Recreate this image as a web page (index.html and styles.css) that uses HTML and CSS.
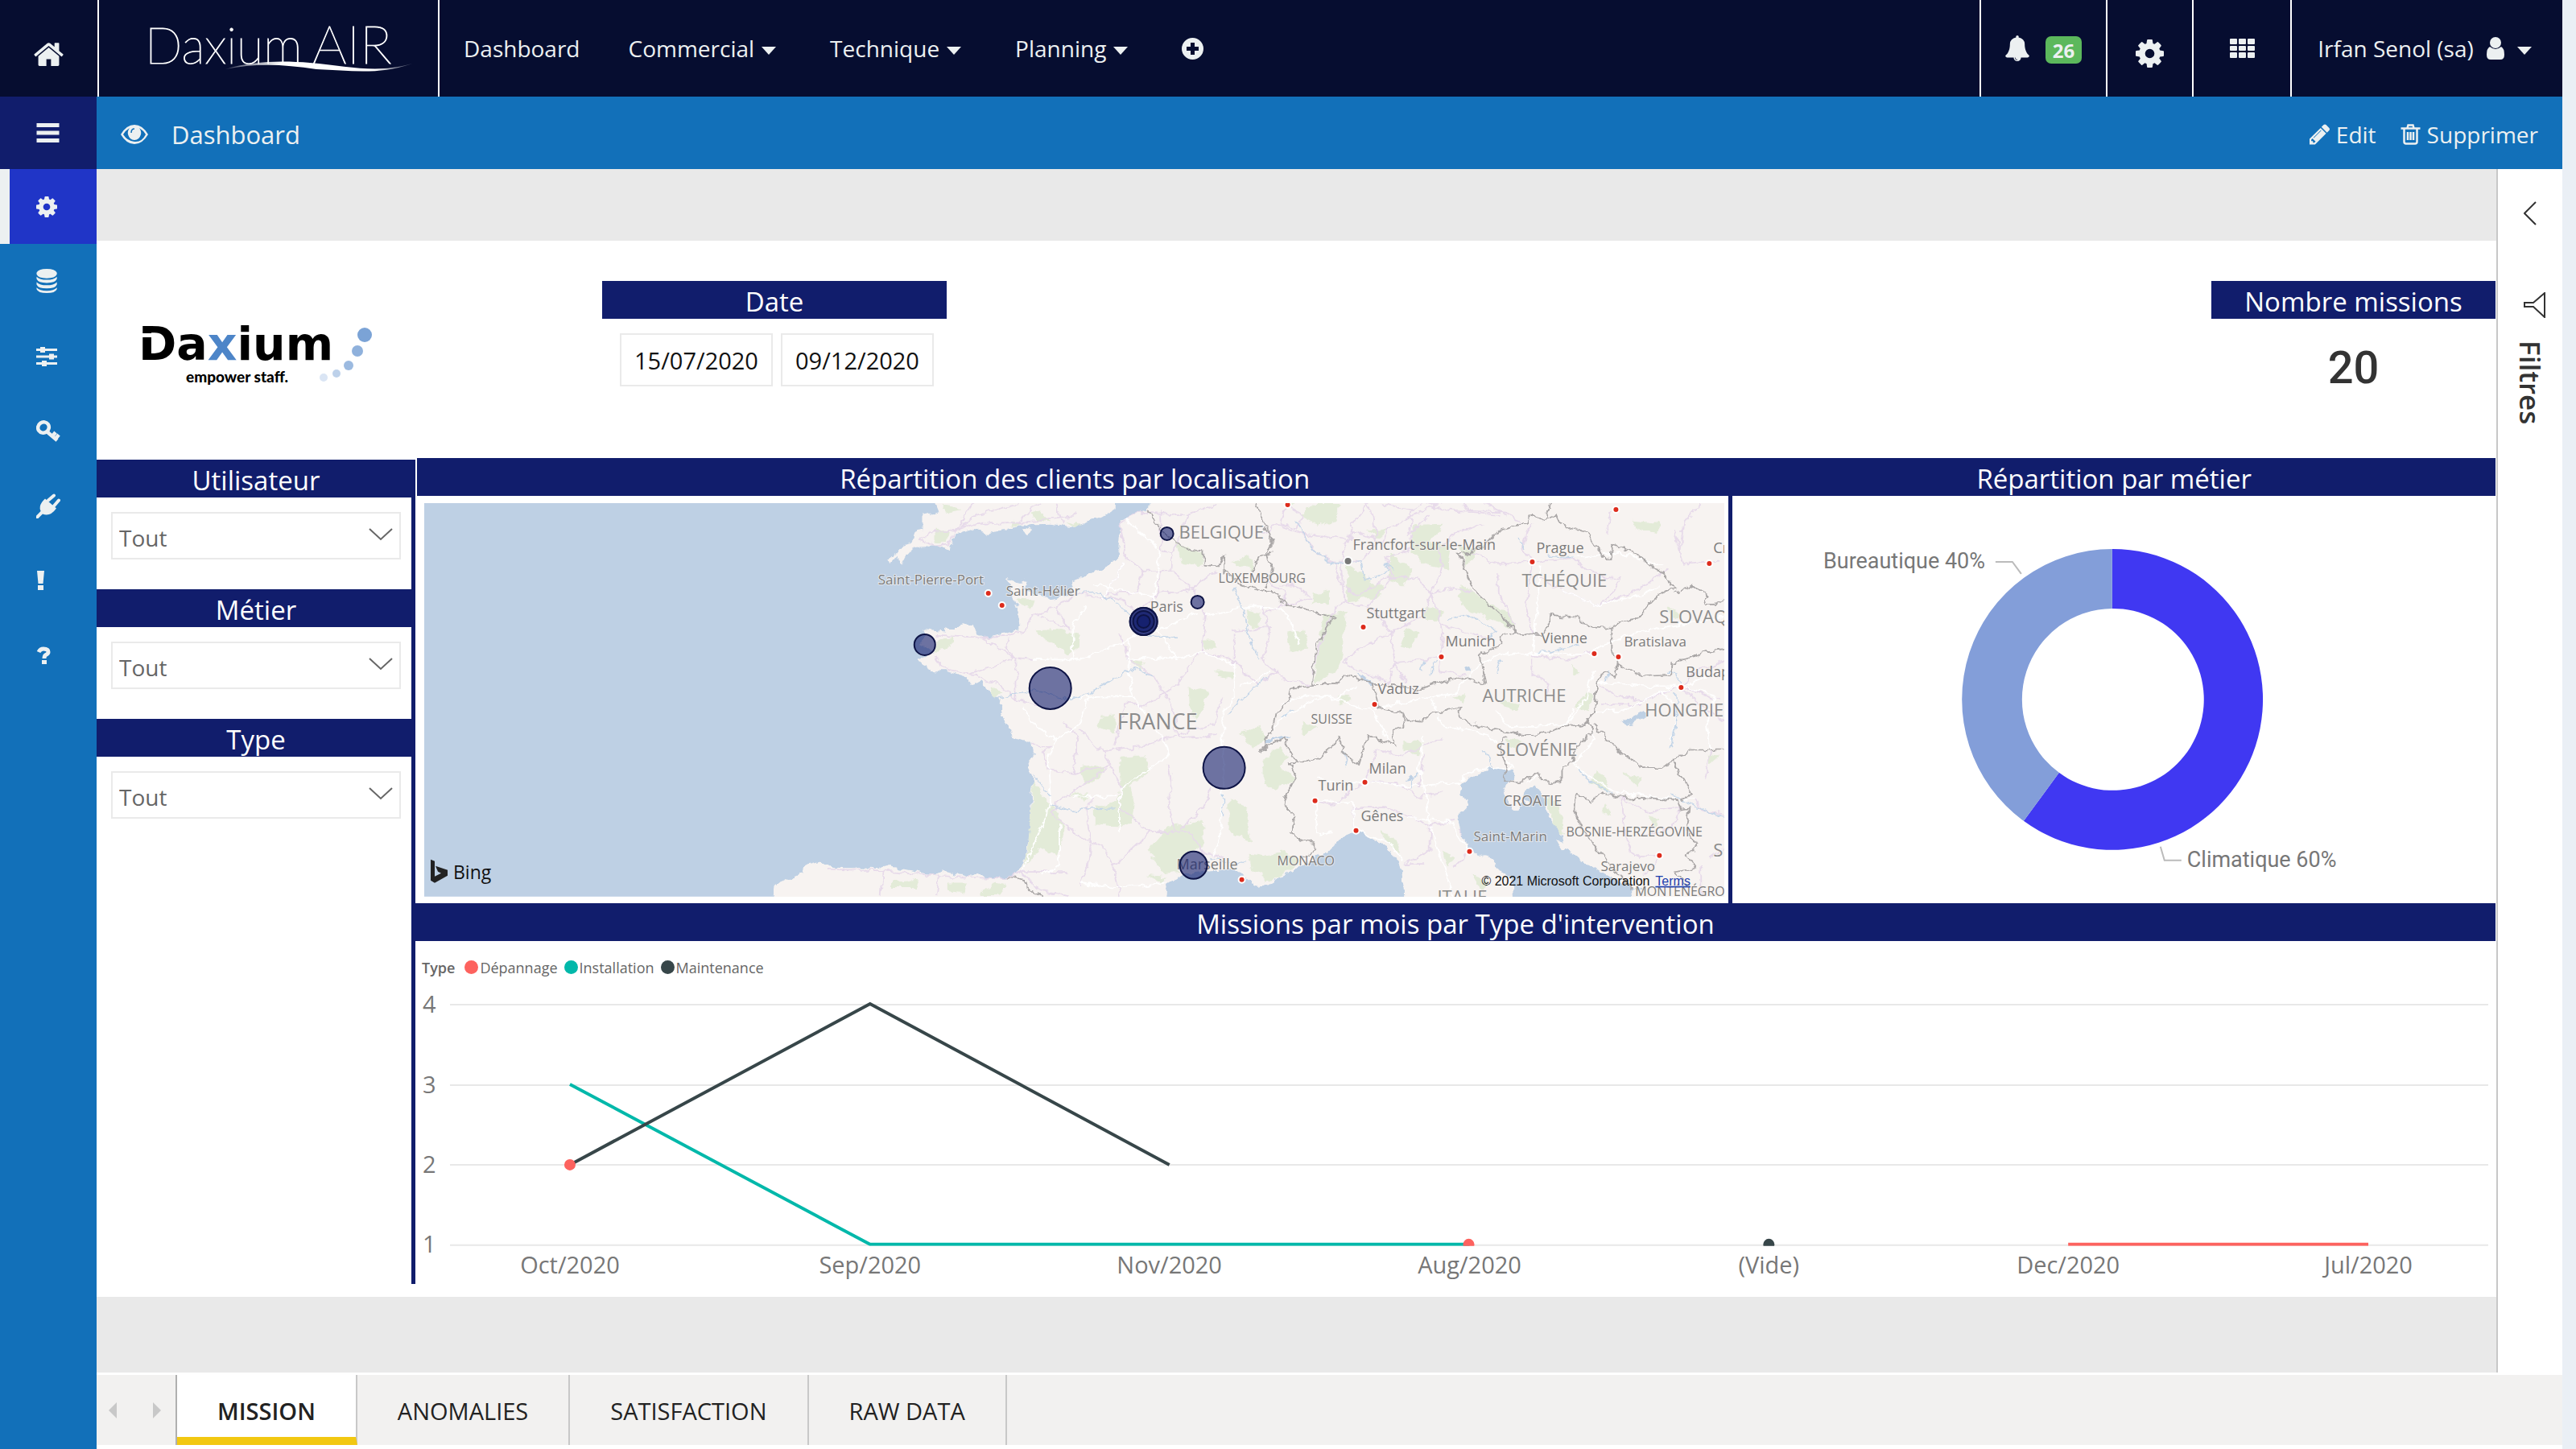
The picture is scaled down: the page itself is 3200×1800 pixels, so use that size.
FILE: index.html
```html
<!DOCTYPE html>
<html lang="fr">
<head>
<meta charset="utf-8">
<meta name="viewport" content="width=device-width, initial-scale=1">
<title>Daxium AIR - Dashboard</title>
<link rel="stylesheet" href="styles.css">
</head>
<body>
<svg class="sprite" aria-hidden="true">
  <symbol id="cog" viewBox="128 128 1536 1536"><path d="M1152 896q0-106-75-181t-181-75-181 75-75 181 75 181 181 75 181-75 75-181zm512-109v222q0 12-8 23t-20 13l-185 28q-19 54-39 91 35 50 107 138 10 12 10 25t-9 23q-27 37-99 108t-94 71q-12 0-26-9l-138-108q-44 23-91 38-16 136-29 186-7 28-36 28h-222q-14 0-24.500-8.500t-11.500-21.500l-28-184q-49-16-90-37l-141 107q-10 9-25 9-14 0-25-11-126-114-165-168-7-10-7-23 0-12 8-23 15-21 51-66.500t54-70.500q-27-50-41-99l-183-27q-13-2-21-12.500t-8-23.500v-222q0-12 8-23t19-13l186-28q14-46 39-92-40-57-107-138-10-12-10-24 0-10 9-23 26-36 98.500-107.500t94.500-71.500q13 0 26 10l138 107q44-23 91-38 16-136 29-186 7-28 36-28h222q14 0 24.500 8.500t11.500 21.500l28 184q49 16 90 37l142-107q9-9 24-9 13 0 25 10 129 119 165 170 7 8 7 22 0 12-8 23-15 21-51 66.500t-54 70.500q26 50 41 98l183 28q13 2 21 12.500t8 23.500z"/></symbol>
  <symbol id="caret" viewBox="0 0 18 10"><path d="M0 0h18l-9 10z"/></symbol>
  <symbol id="chevron" viewBox="0 0 30 16"><path d="M1 1l14 13L29 1" fill="none" stroke="#666" stroke-width="2"/></symbol>
</svg>
<div class="app">
  <header class="topbar">
    <a class="home" href="#" aria-label="Accueil"><svg class="ic-home" viewBox="89 200 1614 1336"><path d="M1472 992v480q0 26-19 45t-45 19h-384v-384h-256v384h-384q-26 0-45-19t-19-45v-480q0-1 .5-3t.5-3l575-474 575 474q1 2 1 6zm223-69l-62 74q-8 9-21 11h-3q-13 0-21-7l-692-577-692 577q-12 8-24 7-13-2-21-11l-62-74q-8-10-7-23.500t11-21.500l719-599q32-26 76-26t76 26l244 204v-195q0-14 9-23t23-9h192q14 0 23 9t9 23v408l219 182q10 8 11 21.500t-7 23.500z"/></svg></a>
    <a class="brand" href="#" aria-label="Daxium AIR">
      <svg viewBox="0 0 420 120"><defs><linearGradient id="swoosh"><stop offset="0" stop-color="#fff" stop-opacity=".2"/><stop offset=".3" stop-color="#fff"/><stop offset=".8" stop-color="#fff"/><stop offset="1" stop-color="#fff" stop-opacity=".2"/></linearGradient></defs>
      <text class="brand-a" x="57" y="79">Daxium</text><text class="brand-b" x="265" y="79">AIR</text>
      <path fill="url(#swoosh)" d="M157 86C190 76 225 75 262 78C310 82 345 92 389 79C350 93 315 88 270 86C230 80 195 78 157 86Z"/></svg>
    </a>
    <nav class="menu">
      <a href="#">Dashboard</a>
      <a class="drop" href="#">Commercial <svg class="caret"><use href="#caret"/></svg></a>
      <a class="drop" href="#">Technique <svg class="caret"><use href="#caret"/></svg></a>
      <a class="drop" href="#">Planning <svg class="caret"><use href="#caret"/></svg></a>
      <a href="#" class="plus" aria-label="Ajouter"><svg viewBox="0 0 27 27"><path fill-rule="evenodd" d="M13.500 0a13.500 13.500 0 1 0 0 27a13.500 13.500 0 0 0 0-27zM11 6h5v5h5v5h-5v5h-5v-5H6v-5h5z"/></svg></a>
    </nav>
    <a class="cell bell" href="#" aria-label="Notifications"><svg viewBox="64 0 1664 1792"><path d="M912 1696q0-16-16-16-59 0-101.500-42.500t-42.500-101.500q0-16-16-16t-16 16q0 73 51.500 124.500t124.500 51.500q16 0 16-16zm816-288q0 52-38 90t-90 38h-448q0 106-75 181t-181 75-181-75-75-181h-448q-52 0-90-38t-38-90q50-42 91-88t85-119.500 74.500-158.500 50-206 19.500-260q0-152 117-282.500t307-158.500q-8-19-8-39 0-40 28-68t68-28 68 28 28 68q0 20-8 39 190 28 307 158.500t117 282.500q0 139 19.500 260t50 206 74.500 158.500 85 119.500 91 88z"/></svg><span class="badge">26</span></a>
    <a class="cell gear" href="#" aria-label="Paramètres"><svg><use href="#cog"/></svg></a>
    <a class="cell apps" href="#" aria-label="Applications"><svg viewBox="0 0 31 24"><g><rect width="9" height="7" rx="1"/><rect x="11" width="9" height="7" rx="1"/><rect x="22" width="9" height="7" rx="1"/><rect y="9" width="9" height="6" rx="1"/><rect x="11" y="9" width="9" height="6" rx="1"/><rect x="22" y="9" width="9" height="6" rx="1"/><rect y="17" width="9" height="7" rx="1"/><rect x="11" y="17" width="9" height="7" rx="1"/><rect x="22" y="17" width="9" height="7" rx="1"/></g></svg></a>
    <a class="cell user" href="#">Irfan Senol (sa) <svg class="ic-user" viewBox="0 0 22 28"><circle cx="11" cy="7" r="7"/><path d="M4 12Q11 18 18 12Q22 14 22 22Q22 28 17 28H5Q0 28 0 22Q0 14 4 12z"/></svg><svg class="caret"><use href="#caret"/></svg></a>
  </header>

  <div class="body">
    <nav class="side" aria-label="Navigation latérale">
      <button class="burger" aria-label="Menu"><svg viewBox="0 0 28 24"><path d="M0 0h28v5H0zM0 9.500h28v5H0zM0 19h28v5H0z"/></svg></button>
      <a class="active" href="#" aria-label="Configuration"><svg viewBox="0 0 30 28"><use href="#cog" width="26" height="28"/></svg></a>
      <a href="#" aria-label="Données"><svg class="tall" viewBox="0 0 30 32"><path d="M0 5Q2 0 13 0T26 5V7Q24 12 13 12T0 7zM0 10Q4 14 13 14T26 10V13Q24 18 13 18T0 13zM0 17Q4 21 13 21T26 17V20Q24 25 13 25T0 20zM0 24Q4 28 13 28T26 24V26Q24 31 13 31T0 26z"/></svg></a>
      <a href="#" aria-label="Réglages"><svg viewBox="0 0 30 28"><path d="M0 4h26v3H0zM0 12.500h26v3H0zM0 21h26v3H0zM5 2h6v7H5zM16 10.500h6v7h-6zM7 19h6v7H7z"/></svg></a>
      <a href="#" aria-label="Accès"><svg viewBox="0 0 30 28"><path fill="none" stroke="#ecf0f1" stroke-width="4.500" d="M13 14L26 25M20 20l4-5M24 23l4-5"/><ellipse cx="9" cy="9" rx="7" ry="6.500" fill="none" stroke="#ecf0f1" stroke-width="4.500" transform="rotate(-35 9 9)"/></svg></a>
      <a href="#" aria-label="Connecteurs"><svg class="tall" viewBox="0 0 30 30"><path d="M1 29L7 23M15 8L22 2M22 15L28 8" fill="none" stroke="#ecf0f1" stroke-width="4" stroke-linecap="round"/><path d="M11 6l14 12q-8 11-17 7q-8-9 3-19z"/></svg></a>
      <a href="#" aria-label="Alertes"><svg viewBox="0 0 30 28"><path d="M1 1h9l-1.500 16h-6zM2 19h7v6H2z"/></svg></a>
      <a href="#" aria-label="Aide"><svg viewBox="0 0 30 28"><path fill="none" stroke="#ecf0f1" stroke-width="5" d="M3 9Q5 5 9 5Q15 5 15 9Q15 11 12 12.500Q10 13.500 10 17"/><path d="M7 19h6v5H7z"/></svg></a>
    </nav>

    <main class="content">
      <div class="subbar">
        <svg class="eye" viewBox="0 0 34 24"><path fill-rule="evenodd" d="M0 12Q7 0 17 0T34 12Q27 24 17 24T0 12zM3 12Q8 20 17 21T31 12Q28 7 23 4Q26 8 25 12Q23 19 17 19T9 12Q8 8 11 4Q6 7 3 12z"/><path d="M13 10Q13 5 17 5" fill="none" stroke="#1270b9" stroke-width="1.500"/></svg>
        <h1>Dashboard</h1>
        <a href="#"><svg viewBox="128 150 1515 1515"><path d="M491 1536l91-91-235-235-91 91v107h128v128h107zm523-928q0-22-22-22-10 0-17 7l-542 542q-7 7-7 17 0 22 22 22 10 0 17-7l542-542q7-7 7-17zm-54-192l416 416-832 832h-416v-416zm683 96q0 53-37 90l-166 166-416-416 166-165q36-38 90-38 53 0 91 38l235 234q37 39 37 91z"/></svg>Edit</a>
        <a href="#"><svg viewBox="0 0 24 26"><path fill="none" stroke="#ecf0f1" stroke-width="2.500" d="M0 5.500h24M4 5v17q0 2.500 2.500 2.500h11q2.500 0 2.500-2.500V5M8 5l1-3.500h6L16 5M8.500 10v10M12 10v10M15.500 10v10"/></svg>Supprimer</a>
      </div>
      <div class="stage">
        <section class="report">
          <div class="kpis">
            <svg class="logo" viewBox="0 0 320 100" role="img" aria-label="Daxium empower staff.">
              <text class="logo-name" x="52" y="55">Da<tspan class="blue">x</tspan>ium</text><path fill="#fff" d="M50 22h21v5H50z"/>
              <text class="logo-tag" x="111" y="83">empower staff.</text>
              <g fill="#7ba3d6"><circle cx="333" cy="24" r="9"/><circle cx="324" cy="44" r="7" opacity=".85"/><circle cx="313" cy="62" r="6" opacity=".75"/><circle cx="298" cy="72" r="5" opacity=".5"/><circle cx="282" cy="77" r="5" opacity=".28"/></g>
            </svg>
            <div class="card date">
              <h2>Date</h2>
              <div class="dates"><input aria-label="Date de début" value="15/07/2020"><input aria-label="Date de fin" value="09/12/2020"></div>
            </div>
            <div class="card count"><h2>Nombre missions</h2><output>20</output></div>
          </div>
          <div class="board">
            <div class="filters">
              <div class="filter"><h2><label for="f1">Utilisateur</label></h2><div class="pick"><select id="f1"><option>Tout</option></select><svg><use href="#chevron"/></svg></div></div>
              <div class="filter"><h2><label for="f2">Métier</label></h2><div class="pick"><select id="f2"><option>Tout</option></select><svg><use href="#chevron"/></svg></div></div>
              <div class="filter"><h2><label for="f3">Type</label></h2><div class="pick"><select id="f3"><option>Tout</option></select><svg><use href="#chevron"/></svg></div></div>
            </div>
            <div class="charts">
              <section class="geo">
                <h2>Répartition des clients par localisation</h2>
                <svg class="map" viewBox="527 625 1616 489" role="img" aria-label="Carte des clients">
                  <defs><filter id="rough" x="0" y="0" width="100%" height="100%"><feTurbulence type="fractalNoise" baseFrequency=".09" numOctaves="3" seed="4"/><feDisplacementMap in="SourceGraphic" scale="10" xChannelSelector="R" yChannelSelector="G"/></filter></defs>
                  <rect class="sea" x="527" y="625" width="1616" height="489"/>
                  <g filter="url(#rough)">
                    <g transform="translate(1020 620) scale(.357 .3333)">
                      <path class="land" d="M1150-40L1140 40L1045 75L1035 190L1045 210L1000 250L875 305L878 350L820 375L710 340L715 305L690 312L650 300L660 335L685 410L692 490L640 500L570 515L540 500L530 470L495 460L480 480L440 480L435 500L360 490L370 510L345 540L395 570L330 600L370 620L380 640L440 640L500 660L530 690L560 680L590 720L620 740L635 770L625 810L655 850L665 885L735 910L740 950L720 1000L740 1045L730 1130L730 1230L710 1340L690 1390L650 1415L590 1415L540 1395L520 1410L420 1385L390 1400L215 1365L190 1378L46 1374L-2 1346L-58 1363L-66 1396L-163 1440L-175 1540H3400V-40Z"/>
                      <path class="land" d="M385-20L410 45L355 60L355 110L325 125L320 160L290 170L260 205L225 215L235 235L262 215L280 245L295 215L325 180L400 175L440 195L470 130L520 110L580 130L640 120L690 95L800 92L890 105L930 80L980 65L1020 40V-20ZM695 115L715 105L738 115L718 132Z"/>
                      <g class="wood"><path d="M400 110L450 115L440 160L400 165ZM420 15L490 40L440 50ZM730 50L760 40L800 85L750 80ZM665 80L700 90L660 105ZM850 80L910 95L890 108ZM1230 160L1330 200L1320 250L1260 240ZM1480 210L1510 230L1500 270L1430 235ZM750 490L830 485L905 510L895 550L860 580L820 545L765 515ZM400 530L460 515L455 540L400 570ZM680 370L745 375L730 405L690 400ZM1480 410L1530 420L1525 480L1485 470ZM1330 530L1370 530L1375 560L1335 562ZM1280 700L1350 720L1310 825L1285 800ZM970 810L1025 805L1025 870L960 855ZM1370 640L1440 645L1430 675L1385 660ZM1070 600L1130 610L1110 640ZM900 1000L985 990L975 1040L920 1065ZM1035 960L1130 955L1140 1020L1080 1070L1090 1130L1080 1220L950 1210L950 1150L1030 1130L1045 1050ZM865 1100L930 1100L920 1125ZM740 1050L765 1090L830 1180L850 1240L820 1330L760 1300L700 1385L720 1300ZM1210 1220L1330 1200L1340 1290L1260 1330L1250 1390L1190 1400L1140 1310ZM1420 1110L1480 1150L1500 1280L1420 1240ZM1490 1320L1568 1330L1568 1380L1500 1390ZM1460 870L1530 840L1550 900L1500 930ZM250 1425L340 1420L330 1450L250 1450ZM440 1430L510 1430L500 1470L440 1460ZM600 1430L650 1440L620 1480L550 1480ZM1130 1400L1210 1410L1190 1430ZM590 700L630 720L600 740Z"/></g>
                      <g class="road"><path d="M530 15L470 120L530 65L640 30L700 15M340 155L380 120L470 115L440 180M340 155L400 175L440 170M470 115L520 95L690 85L740 30L770 15M690 85L900 60M820 15L840 90M400 510L560 515L640 510L710 495L730 440L820 400L860 480L760 440M400 590L420 630L510 650L590 630L670 590L560 515M510 650L620 690L680 750L760 770M670 590L740 597M680 590V750M650 520L645 560L675 590M1060 230L980 370L900 350L820 400M1060 210L1040 90L1100 50L1280 55L1380 20M1060 210L1120 270L1220 265L1225 200L1280 55M1120 270L1100 350H990M1180 40L1185 190L1225 200M1220 265L1300 340L1340 430L1325 570M1170 370L1180 270M980 360L1060 380L1100 420L1180 350L1270 345L1380 270M1040 500L1070 600L1160 660L1230 790L1240 890L1380 880M1320 570L1240 690L1130 770L1060 760L1020 920M1430 490L1568 480M1440 600V500M1320 570L1420 590L1520 690M735 920L800 920L770 940L790 1010L880 1020L890 880L840 830M900 860L980 940L1010 990L880 1020M980 940L1110 925L1240 880L1370 840L1400 740M1005 990L950 1040L820 1130L800 1170L900 1260L980 1290M1005 990L1040 1060L1040 1150L1150 1240L1280 1240L1330 1320L1400 1340M950 1110L920 1160L940 1270L930 1370L900 1440M1150 1240L1080 1310L1020 1370L980 1290M1210 990L1220 1060L1210 1130L1230 1240M1360 1080L1330 1150L1250 1230M20 1380L215 1385L420 1405L500 1410L640 1415L700 1390L860 1390M215 1385L210 1480M410 1400L400 1480M1020 1370L1040 1480M700 1390L760 1460L860 1480"/></g>
                      <g class="road pale"><path d="M1060 70L1180 190L1160 370L940 315M980 370L1060 230M920 400L875 480L880 600L740 597M1100 500L1040 540L880 605M1070 520V630L1090 740L1200 910M1200 910L1210 960L1040 1080V1240M870 740L1090 735M1070 600L1230 590L1330 570L1440 615V740L1400 790V900L1400 1100L1390 1270L1360 1330M1460 700L1568 640M820 900L900 840L930 740M700 770L750 850L820 900L790 960L800 1140L700 1390M830 1210V1370L770 1400M900 1430L1020 1450L1210 1430M880 1110L1030 1105M1340 430L1490 400L1568 405M1170 490L1310 420M1070 520L1100 510L1170 490L1240 600"/></g>
                      <g class="river"><path d="M620 740L740 715L870 745L960 710L1080 630L1160 660M900 350L970 345L1040 400L1110 480L1170 520L1240 520M800 1140L880 1160L1020 1155M1420 800L1480 730L1530 680L1568 660M1400 1100V1180M1435 330L1470 420L1490 520L1530 600M1350 1340L1480 1360M740 1030L800 1110"/></g>
                      <path class="sea" d="M1195 1540L1205 1440L1270 1395L1370 1380L1440 1385L1480 1410L1520 1450L1700 1420V1540Z"/>
                    </g>
                    <g transform="translate(1570 620) scale(.37 .3333)">
                      <g class="wood"><path d="M170 15H260L240 80L190 100L120 60ZM420 110L380 150L350 120ZM500 100L600 95L560 160L630 180L620 260L530 240L500 200ZM280 240L360 300L340 370L280 380ZM420 200L500 260L470 320L420 300ZM170 350L220 340L220 390L160 395ZM200 430L280 420L260 600L240 650L170 680L180 600ZM660 320L750 380L830 430L840 480L770 450L680 410L655 360ZM540 400L600 420L590 450L540 450ZM480 480L520 500L490 560L460 550ZM310 310L400 320L390 370L340 370ZM650 170L720 190L680 250ZM1240 80L1330 90L1320 130L1250 110ZM1360 400L1400 430L1370 450ZM1040 620L1060 640L1040 660ZM800 750L860 760L850 790L810 780ZM1080 720L1110 730L1090 790L1050 780ZM640 740L680 730L670 770ZM820 890L870 900L850 940L820 930ZM1120 1010L1160 1060L1150 1090L1100 1060ZM1210 1020L1270 1040L1260 1070ZM950 1110L990 1130L1010 1250L980 1240ZM1150 1130L1170 1180L1140 1170ZM0 980L50 920L80 960L60 1000L110 1040L40 1080L0 1070ZM0 1330L70 1310L130 1350L40 1420L0 1430ZM390 1240L440 1260L460 1320L430 1300ZM470 900L540 910L520 950L470 940ZM600 1310L640 1340L620 1370ZM700 1400L750 1420L740 1470ZM250 730L300 740L260 770ZM130 830L180 850L130 890ZM80 500L140 490L150 560L90 570ZM60 10L110 0L90 30ZM1290 1180L1330 1190L1310 1220ZM1490 950L1530 960L1500 990Z"/></g>
                      <g class="road"><path d="M80 15L60 100L130 130L180 200L240 240L260 320L320 360L400 300L430 290L520 300L560 350L640 330L700 350M80 15L130 70L110 110L50 90L0 130M130 130L280 150L300 120L400 160L420 110L540 40L600 15M280 150L260 240L270 380L230 430L200 510L160 660M250 230H330L380 160L370 60L340 15M390 15L500 40L530 20M500 40L490 130L560 60M520 0L600 40L820 50L860 90M430 290L410 220L490 190L500 130M560 350L600 260L590 180L640 130L740 90M560 350L600 470L595 590L590 640L680 655M560 350L540 430L480 470L320 560L270 600M600 470L760 520M270 380L370 410L430 500L440 610L480 690M270 600L330 650L420 680L440 610L595 590M430 290L350 400M900 90L870 180L905 234L780 240L700 200M905 234L1030 220L1130 280M905 234L880 400L905 500M790 280V350L840 470M905 280L1000 340L1130 400L1270 330L1360 260M1130 400L1200 300L1130 290M1170 40L1150 130M1400 200L1410 90L1470 15M1380 110L1410 240L1530 230M905 590V650L960 690L950 730M1100 570L1020 600L900 580M1130 690L1170 730L1280 750L1400 700L1530 750M1400 700L1450 640L1549 600M1130 765L1270 765M1400 700L1490 790L1549 830M1500 940L1480 1050M0 400L20 500L0 600L80 680L150 690M0 430L60 400L160 370L110 320L50 320M340 1056L450 1060L520 1110L600 1090M340 1056L380 930L460 960L540 920L600 890M540 950L520 1080M174 1124L230 1140L340 1056M310 1235L300 1150L400 1150L560 1215L640 1200M560 1215V1310L480 1360L540 1360M660 1230L700 1310L640 1370M1200 1110L1210 1230L1240 1330L1330 1329L1280 1400M1200 1110L1290 1170L1400 1150L1370 1230L1270 1260M1450 1120L1470 1160L1549 1180M1470 1360V1480M1500 1340L1549 1300M350 15L300 90L290 150M660 0L690 50L800 60M740 15L820 60M0 300L80 350L60 400M0 680L50 640"/></g>
                      <g class="road pale"><path d="M0 405L60 410L90 450L120 540M30 860L80 800L200 740L260 750L300 770L370 790L420 900M60 760L150 730L250 740L310 700M370 780L470 760L540 740L640 730L720 620L790 580L900 575L1110 580M560 745L600 840L690 860L760 880L840 1000L700 1010L660 1050M780 790L830 850L1020 840L1080 750L1110 640M1020 840L1040 780M180 1040L240 1060L340 1056L480 1070L660 1060M174 1124L180 1250L230 1240M174 1124L300 1130L310 1235M540 880L520 1000L540 1060L560 1210M480 1190L620 1200L690 1310M1120 680L1280 700L1400 700M1110 790L1200 790L1340 720L1390 780L1370 900M1400 700L1520 730L1490 840L1500 930M1040 990L1110 900L1110 860M1040 990L1170 1090L1300 1110L1450 1120M920 1030L880 1060M1340 720L1549 640M930 250L920 400L905 570M1030 220L1200 200L1340 250M1000 340L1130 400L1330 330M310 1235L420 1280L470 1350M560 1220L600 1360L640 1480M1110 560L1240 500L1549 440"/></g>
                      <g class="river"><path d="M110 80L160 180L230 240L330 230L340 300L420 270L410 240L440 260M620 450L690 430L780 490L750 520M920 575L990 560L1060 540M1160 640L1150 680M270 940L280 1000M540 600L530 640M560 650L580 600M780 640L800 600M1380 720L1390 780L1370 930M1060 1010L1110 1060L1170 1100M1370 1100L1420 1130L1500 1170L1549 1190M740 940L770 1000M520 1010L490 1080M60 820L100 780M850 140L880 180M950 210L1050 220M1350 640L1390 650L1400 700M1240 1450L1280 1460"/></g>
                      <path class="sea" d="M0 1450L60 1410L130 1365L220 1310L260 1260L310 1237L370 1270L430 1310L455 1360L470 1440L475 1540H0ZM663 1055L760 1005L830 1010L845 1035L815 1060L805 1080L815 1130L850 1160L870 1130L885 1080L910 1070L940 1110L960 1190L1000 1240L1010 1290L1060 1340L1150 1400L1240 1450L1240 1540H843L835 1420L760 1340L690 1310L665 1240L655 1180L690 1140L665 1100ZM1200 835L1270 795L1290 805L1215 845ZM310 650L380 690L365 705ZM5 900L60 880L90 890L40 895L5 920ZM675 630L690 620L698 638L680 640ZM480 1050L495 1020L505 1045L490 1055Z"/>
                      <path class="land" d="M870 1110L890 1120L900 1150L885 1145ZM985 1270L1040 1300L1050 1330L1000 1300Z"/>
                      <g class="border"><path d="M650 200L680 260L700 330L830 470L850 500L930 505L960 470L965 432L1050 440L1090 475L1170 480L1200 460L1250 450L1310 380L1350 340L1380 330L1350 280L1290 240L1250 200L1170 170L1165 220L1140 215L1090 130L1000 95L985 60L940 80L900 55L880 90L800 110L770 140L740 175L680 205Z M950 80L965 0M850 500L790 510L800 540L730 580L745 690L660 660L580 690L510 715L440 690L370 690M370 690L385 775L470 795L480 825L530 830L560 800L660 780L660 810L720 850L910 885L1000 850L1080 840L1110 790L1120 670L1150 650L1180 660L1190 610L1170 560L1170 480M370 690L270 655L250 690L160 690L130 700L95 710L90 740L40 800L30 860L0 900M0 930L70 890L90 950L120 985L190 965L255 885L265 940L320 990L350 880L400 900L440 920L430 860L470 850L470 795M160 690L180 540L235 440L110 400L80 395L30 345L0 345M120 985L90 985L110 1030L75 1110L70 1140L105 1180L90 1240L120 1265L175 1280L175 1310L130 1340M1190 610L1260 655L1370 650L1370 610L1450 590L1480 570L1560 555M1380 340L1400 350L1440 320L1480 350L1490 390L1520 390L1560 360M820 880L790 920L820 990L810 1050L860 1055L915 1020L960 1060L1000 1050L1000 1000L1040 980L1050 920L1110 870L1085 820M1110 840L1200 950L1270 1000L1340 1000L1380 970L1430 935H1560M1380 980L1400 1030L1440 1100L1400 1120M1050 1100L1100 1130L1130 1095L1200 1110L1390 1120L1400 1155L1430 1150L1420 1230L1460 1290L1420 1330L1450 1380L1380 1390L1430 1440M1050 1100L1045 1170L1090 1260L1170 1370L1240 1450M0 100L30 150L10 200L30 260L0 330"/></g>
                    </g>
                    <g class="border" transform="translate(1020 620) scale(.357 .3333)"><path d="M1142 40L1165 90L1220 150L1275 185L1330 190L1330 245L1380 250L1405 215L1405 270L1460 320L1540 345M1500 270L1530 215L1568 200M1510 0L1530 60L1555 110L1568 180M660 1410L710 1420L720 1450L790 1500M1568 870L1545 890L1550 930L1525 940"/></g>
                  </g>
                  <g class="lab big"><text class="xl" x="1388" y="906">FRANCE</text><text x="1465" y="669">BELGIQUE</text><text x="1891" y="729">TCHÉQUIE</text><text x="2062" y="774">SLOVAQUIE</text><text x="1842" y="872">AUTRICHE</text><text x="2044" y="890">HONGRIE</text><text x="1859" y="939">SLOVÉNIE</text><text x="1786" y="1122">ITALIE</text><text x="2129" y="1064">SERBIE</text></g>
                  <g class="lab small"><text x="1514" y="724">LUXEMBOURG</text><text x="1629" y="899">SUISSE</text><text x="1587" y="1075">MONACO</text><text x="1946" y="1039">BOSNIE-HERZÉGOVINE</text><text x="2032" y="1113">MONTÉNÉGRO</text></g>
                  <g class="lab town"><text x="1868" y="1001">CROATIE</text><text x="1429" y="760">Paris</text><text x="1462" y="1080">Marseille</text><text x="1681" y="683">Francfort-sur-le-Main</text><text x="1909" y="687">Prague</text><text x="2129" y="687">Cracovie</text><text x="1698" y="768">Stuttgart</text><text x="1796" y="803">Munich</text><text x="1915" y="799">Vienne</text><text x="1712" y="862">Vaduz</text><text x="2095" y="841">Budapest</text><text x="1701" y="961">Milan</text><text x="1638" y="982">Turin</text><text x="1691" y="1020">Gênes</text></g>
                  <g class="lab town2"><text x="1091" y="726">Saint-Pierre-Port</text><text x="1250" y="740">Saint-Hélier</text><text x="2018" y="803">Bratislava</text><text x="1831" y="1045">Saint-Marin</text><text x="1989" y="1082">Sarajevo</text></g>
                  <g class="pin"><circle cx="1228" cy="737" r="4"/><circle cx="1245" cy="752" r="4"/><circle cx="1543" cy="1093" r="4"/><circle cx="1600" cy="627" r="4"/><circle cx="2008" cy="633" r="4"/><circle cx="1904" cy="698" r="4"/><circle cx="2124" cy="700" r="4"/><circle cx="1694" cy="779" r="4"/><circle cx="1791" cy="816" r="4"/><circle cx="1981" cy="812" r="4"/><circle cx="2011" cy="816" r="4"/><circle cx="2089" cy="854" r="4"/><circle cx="1708" cy="875" r="4"/><circle cx="1696" cy="972" r="4"/><circle cx="1634" cy="995" r="4"/><circle cx="1685" cy="1032" r="4"/><circle cx="1826" cy="1058" r="4"/><circle cx="2062" cy="1063" r="4"/><circle class="grey" cx="1675" cy="697" r="5"/></g>
                  <g class="bubble"><circle cx="1149" cy="801" r="13"/><circle cx="1305" cy="855" r="26"/><circle cx="1488" cy="748" r="8"/><circle cx="1450" cy="663" r="8"/><circle cx="1521" cy="954" r="26"/><circle cx="1483" cy="1075" r="17"/><circle cx="1421" cy="772" r="17"/><circle cx="1421" cy="772" r="17"/><circle cx="1421" cy="772" r="13"/><circle cx="1421" cy="772" r="8"/></g>
                  <path d="M535 1068l5 2v19l8-4l-4-2l-3-7l15 5v7l-16 9l-5-3z"/><text class="bing" x="563" y="1092">Bing</text>
                  <text class="copy" x="1841" y="1100">© 2021 Microsoft Corporation</text><a href="#"><text class="copy terms" x="2057" y="1100">Terms</text></a>
                </svg>
              </section>
              <section class="trade">
                <h2>Répartition par métier</h2>
                <svg viewBox="2153 616 948 504" role="img" aria-label="Climatique 60%, Bureautique 40%">
                  <path fill="#4038f2" d="M2625 682A187 187 0 1 1 2515 1020L2559 960A113 113 0 1 0 2625 756Z"/>
                  <path fill="#839ed9" d="M2625 682A187 187 0 0 0 2515 1020L2559 960A113 113 0 0 1 2625 756Z"/>
                  <path class="lead" d="M2480 698h21l11 15M2685 1052l5 17h21"/>
                  <text class="dlab" x="2266" y="706">Bureautique 40%</text><text class="dlab" x="2718" y="1077">Climatique 60%</text>
                </svg>
              </section>
              <section class="trend">
                <h2>Missions par mois par Type d'intervention</h2>
                <ul class="legend"><li class="lt">Type</li><li class="r">Dépannage</li><li class="g">Installation</li><li class="k">Maintenance</li></ul>
                <svg viewBox="516 1220 2585 374" role="img" aria-label="Missions par mois">
                  <defs><clipPath id="plot"><path d="M516 1220h2585v327H516z"/></clipPath></defs>
                  <path class="grid" d="M559 1247H3092M559 1347H3092M559 1446H3092M559 1546H3092"/>
                  <g class="axis"><text x="525" y="1257">4</text><text x="525" y="1357">3</text><text x="525" y="1456">2</text><text x="525" y="1555">1</text></g>
                  <g class="axis mid"><text x="708" y="1581">Oct/2020</text><text x="1081" y="1581">Sep/2020</text><text x="1453" y="1581">Nov/2020</text><text x="1826" y="1581">Aug/2020</text><text x="2198" y="1581">(Vide)</text><text x="2570" y="1581">Dec/2020</text><text x="2943" y="1581">Jul/2020</text></g>
                  <g clip-path="url(#plot)" class="series"><path stroke="#01b8aa" d="M708 1346L1081 1545H1826"/><path stroke="#374649" d="M708 1446L1081 1246L1453 1446"/><path stroke="#fd625e" d="M2570 1545H2943"/><g stroke="none"><circle fill="#fd625e" cx="708" cy="1446" r="7"/><circle fill="#fd625e" cx="1825" cy="1545" r="7"/><circle fill="#374649" cx="2198" cy="1545" r="7"/></g></g>
                </svg>
              </section>
            </div>
          </div>
        </section>
        <aside class="pane">
          <button aria-label="Développer"><svg viewBox="0 0 16 30"><path d="M15 1L1 15l14 14" fill="none" stroke="#333" stroke-width="2"/></svg></button>
          <svg class="funnel" viewBox="0 0 28 32"><path d="M1 13h11L26 1v30L12 18H1z" fill="none" stroke="#333" stroke-width="2"/></svg>
          <span>Filtres</span>
        </aside>
      </div>
      <nav class="tabs" aria-label="Pages">
        <div class="arrows"><button aria-label="Précédent"><svg viewBox="0 0 10 20"><path d="M10 0v20L0 10z"/></svg></button><button aria-label="Suivant"><svg viewBox="0 0 10 20"><path d="M0 0v20l10-10z"/></svg></button></div>
        <a class="on" href="#">MISSION</a><a href="#">ANOMALIES</a><a href="#">SATISFACTION</a><a href="#">RAW DATA</a>
      </nav>
    </main>
  </div>
</div>
</body>
</html>
```
FILE: styles.css
```css
* { box-sizing: border-box; }
body { margin: 0; background: #eaeff5; font-family: "Open Sans", "Noto Sans", sans-serif; font-size: 28px; line-height: 40px; color: #222; }
a { color: inherit; text-decoration: none; }
svg { display: block; fill: currentColor; }
h1, h2, ul { margin: 0; padding: 0; font-weight: 400; }
button { border: 0; padding: 0; background: none; color: inherit; }
.sprite { position: absolute; width: 0; height: 0; }
.app { margin-right: 17px; background: #fff; min-height: 100vh; display: flex; flex-direction: column; }

.topbar { display: flex; height: 120px; background: #060d30; color: #ecf0f1; }
.home { width: 123px; border-right: 2px solid #fff; display: flex; align-items: center; justify-content: center; padding-top: 13px; }
.ic-home { width: 37px; height: 30px; }
.brand { width: 423px; border-right: 2px solid #fff; }
.brand svg { width: 420px; height: 120px; fill: #fff; }
.brand-a, .brand-b { font-family: Lato, sans-serif; font-weight: 100; font-size: 61px; stroke: #fff; stroke-width: 1px; }
.brand-b { font-size: 67px; }
.menu { flex: 1; display: flex; align-items: center; gap: 60px; padding-left: 30px; }
.menu a { display: flex; align-items: center; gap: 9px; }
.menu .drop { margin-right: 7px; }
.caret { width: 18px; height: 10px; margin-top: 6px; }
.plus svg { width: 27px; height: 27px; }
.cell { display: flex; align-items: center; justify-content: center; border-left: 2px solid #fff; }
.bell { width: 157px; gap: 20px; }
.bell svg { width: 30px; height: 32px; }
.badge { background: #5cb85c; border-radius: 7px; width: 45px; height: 34px; font-size: 24px; line-height: 36px; font-weight: 700; text-align: center; color: #ecf0f1; margin-top: 3px; }
.gear { width: 107px; padding-top: 12px; }
.gear svg { width: 35px; height: 35px; }
.apps { width: 122px; }
.apps svg { width: 31px; height: 24px; }
.user { width: 338px; gap: 16px; padding-right: 6px; }
.ic-user { width: 22px; height: 28px; }

.body { display: flex; flex: 1; }
.side { width: 120px; background: #1270b9; color: #ecf0f1; display: flex; flex-direction: column; }
.burger { height: 90px; background: #111d6c; display: flex; align-items: center; padding-left: 45px; }
.burger svg { width: 29px; height: 24px; }
.side a { height: 93px; display: flex; align-items: center; padding-left: 45px; }
.side a svg { width: 30px; height: 28px; }
.side a .tall { height: 31px; }
.side .active { background: #2035c7; border-left: 12px solid #ecf0f1; padding-left: 33px; }

.content { flex: 1; min-width: 0; display: flex; flex-direction: column; }
.subbar { height: 90px; background: #1270b9; color: #ecf0f1; display: flex; align-items: center; padding: 4px 30px 0; }
.eye { width: 34px; height: 24px; }
.subbar h1 { flex: 1; margin-left: 29px; font-size: 31px; }
.subbar a { display: flex; align-items: center; gap: 8px; margin-left: 30px; }
.subbar a svg { width: 25px; height: 26px; }

.stage { flex: 1; display: flex; background: #e9e9e9; }
.report { flex: 1; min-width: 0; margin: 89px 0 94px; background: #fff; padding: 50px 1px 15px 0; }
.pane { width: 82px; background: #fff; border-left: 2px solid #c8c8c8; display: flex; flex-direction: column; align-items: center; padding-top: 40px; color: #333; }
.pane button svg { width: 16px; height: 30px; }
.pane .funnel { width: 28px; height: 32px; margin: 83px 0 28px 12px; }
.pane span { writing-mode: vertical-rl; font-weight: 600; font-size: 35px; }

h2 { background: #111d6c; color: #fff; font-size: 33px; line-height: 51px; height: 47px; text-align: center; }
.kpis { display: flex; align-items: flex-start; height: 220px; }
.logo { width: 320px; height: 100px; margin: 43px 308px 0 0; overflow: visible; }
.logo-name { font: 700 57px "DejaVu Sans", sans-serif; fill: #000; }
.logo-name .blue { fill: #4d85c8; }
.logo-tag { font: 900 19px Lato, sans-serif; fill: #000; }
.date { width: 428px; }
.dates { display: flex; gap: 10px; margin: 18px 16px 0 22px; }
.dates input { flex: 1; min-width: 0; height: 66px; border: 2px solid #eaeaea; background: #fff; padding: 0; text-align: center; font: inherit; font-size: 29px; color: #111; }
.count { width: 353px; margin-left: auto; text-align: center; }
.count output { display: block; font: 500 56px/60px Roboto, sans-serif; color: #333; padding-top: 31px; }

.board { display: grid; grid-template-columns: 396px 1fr; }
.filters { border-right: 5px solid #111d6c; margin-top: 2px; }
.filter { height: 161px; }
.filter h2 { margin-right: -5px; }
.pick { position: relative; margin: 18px 13px 0 18px; }
.pick select { appearance: none; width: 100%; height: 59px; border: 2px solid #eaeaea; background: #fff; padding: 4px 8px 0; font: inherit; color: #666; }
.pick svg { position: absolute; right: 10px; top: 20px; width: 30px; height: 16px; pointer-events: none; }
.charts { display: grid; grid-template-columns: 1637fr 948fr; }
.geo { border-right: 5px solid #111d6c; }
.geo h2 { margin: 0 -5px 0 2px; }
.map { width: calc(100% - 16px); margin: 9px 5px 8px 11px; }
.trade svg, .trend svg { width: 100%; }
.trend { grid-column: 1 / 3; }
.sea { fill: #bed0e4; }
.land { fill: #f7f3f1; }
.wood { fill: #e3ebd8; }
.road { fill: none; stroke: #e7daea; stroke-width: 5; }
.pale { stroke: #fff; }
.river { fill: none; stroke: #c3d5e8; stroke-width: 4; }
.border { fill: none; stroke: #aaa7a7; stroke-width: 5; }
.lab text { fill: #7b7b7b; paint-order: stroke; stroke: #f7f3f1; stroke-width: 2px; stroke-opacity: 0.7; }
.big text { font-size: 22px; fill: #8c8c8c; }
.big .xl { font-size: 27px; }
.small { font-size: 16px; }
.town { font-size: 18px; }
.town2 { font-size: 17px; }
.pin { fill: #dd2b1c; stroke: #fff; stroke-width: 2; }
.pin .grey { fill: #777; }
.bubble { fill: #111d6c; fill-opacity: 0.6; stroke: #0e1446; stroke-width: 2; }
.bing { font-size: 23px; fill: #111; }
.copy { font: 16px "Liberation Sans", sans-serif; fill: #111; }
.terms { fill: #1f3fae; text-decoration: underline; }
.lead { fill: none; stroke: #bbb; stroke-width: 2; }
.dlab { font: 27px Roboto, sans-serif; fill: #777; }
.legend { display: flex; list-style: none; height: 52px; padding: 14px 8px 0; gap: 8px; font-size: 18px; line-height: 38px; color: #666; }
.legend .lt { font-weight: 600; margin-right: 4px; }
.legend li { display: flex; align-items: center; gap: 2px; }
.r::before, .g::before, .k::before { content: ""; width: 17px; height: 17px; border-radius: 50%; background: #fd625e; }
.g::before { background: #01b8aa; }
.k::before { background: #374649; }
.grid { stroke: #e8e8e8; stroke-width: 2; }
.axis { fill: #777; font-size: 29px; }
.mid { text-anchor: middle; }
.series { fill: none; stroke-width: 4; }

.tabs { display: flex; height: 87px; margin: 3px 0 5px; background: #f2f1f0; }
.arrows { display: flex; align-items: center; justify-content: space-between; width: 100px; padding: 0 18px 0 15px; border-right: 2px solid #b0b0b0; color: #c8c8c8; }
.arrows svg { width: 10px; height: 20px; }
.tabs a { padding: 25px 50px 0; border-right: 2px solid #c8c8c8; font-size: 29px; }
.tabs .on { background: #fff; font-weight: 600; border-bottom: 10px solid #f2c811; }
```
